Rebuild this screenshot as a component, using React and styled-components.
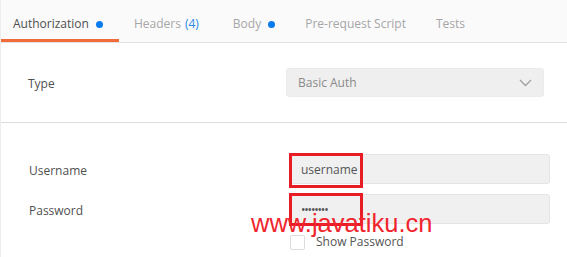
import React from "react";
import styled, { createGlobalStyle } from "styled-components";

const Global = createGlobalStyle`
  html, body { margin: 0; padding: 0; background: #ffffff; }
  body { font-family: "Open Sans", "Noto Sans", sans-serif; }
`;

const Page = styled.div`
  position: relative;
  width: 567px;
  height: 257px;
  overflow: hidden;
  background: #ffffff;
  border-left: 1px solid #eeeeee;
  box-sizing: border-box;
`;

const TabBar = styled.div`
  display: flex;
  height: 42px;
  background: #fafafa;
  border-bottom: 1px solid #e2e2e2;
  margin-left: -1px;
`;

const Tab = styled.div`
  display: flex;
  align-items: flex-start;
  box-sizing: border-box;
  height: 42px;
  padding: 16px ${(p) => p.$pr}px 0 ${(p) => p.$pl}px;
  border-bottom: 3px solid ${(p) => (p.$active ? "#f26b3a" : "transparent")};
  font-size: 12px;
  line-height: 16px;
  color: ${(p) => (p.$active ? "#505050" : "#a6a6a6")};
  white-space: nowrap;
`;

const Count = styled.span`
  color: #2a8ae8;
  margin-left: 4px;
`;

const Dot = styled.span`
  width: 7px;
  height: 7px;
  border-radius: 50%;
  background: #097bed;
  margin: 5px 0 0 7px;
`;

const TypeSection = styled.div`
  display: grid;
  grid-template-columns: 258px 258px;
  align-items: center;
  padding: 25px 0 25px 27px;
  border-bottom: 1px solid #dddddd;
`;

const Label = styled.div`
  font-size: 12px;
  line-height: 16px;
  padding-top: ${(p) => p.$offset || 0}px;
  color: #505050;
`;

const Select = styled.div`
  display: flex;
  align-items: center;
  justify-content: space-between;
  box-sizing: border-box;
  height: 29px;
  padding: 0 11px 0 11px;
  background: #efefef;
  border: 1px solid #ebebeb;
  border-radius: 3px;
  font-size: 12px;
  color: #8a8a8a;
`;

const FieldsSection = styled.div`
  display: grid;
  grid-template-columns: 261px 260px;
  row-gap: 10px;
  align-items: center;
  padding: 31px 0 0 28px;
`;

const FieldWrap = styled.div`
  position: relative;
`;

const Input = styled.input`
  display: block;
  box-sizing: border-box;
  width: 260px;
  height: 30px;
  margin: 0;
  padding: 0 10px;
  background: #f0f0f0;
  border: 1px solid #e4e4e4;
  border-radius: 3px;
  font-family: "Open Sans", sans-serif;
  font-size: 12px;
  color: #555555;
  outline: none;
  letter-spacing: ${(p) => (p.type === "password" ? "-1.2px" : "0")};
`;

const Highlight = styled.div`
  position: absolute;
  left: -1px;
  top: -1px;
  width: 74px;
  height: ${(p) => p.$h}px;
  box-sizing: border-box;
  border: 3px solid #e81c24;
  pointer-events: none;
`;

const CheckRow = styled.label`
  grid-column: 2;
  display: flex;
  align-items: center;
  gap: 11px;
  font-size: 12px;
  line-height: 16px;
  color: #555555;
`;

const Box = styled.span`
  width: 15px;
  height: 15px;
  box-sizing: border-box;
  border: 1px solid #dcdcdc;
  border-radius: 2px;
  background: #ffffff;
`;

const Watermark = styled.div`
  position: absolute;
  left: 250px;
  top: 211px;
  font-family: "Liberation Sans", Arial, sans-serif;
  font-size: 25.5px;
  line-height: 25px;
  color: #f0262e;
  pointer-events: none;
  white-space: nowrap;
`;

export default function App() {
  return (
    <>
      <Global />
      <Page>
        <TabBar>
          <Tab $active $pl={13} $pr={16}>
            Authorization<Dot />
          </Tab>
          <Tab $pl={15} $pr={17}>
            Headers<Count>(4)</Count>
          </Tab>
          <Tab $pl={17} $pr={15}>
            Body<Dot />
          </Tab>
          <Tab $pl={15} $pr={15}>
            Pre-request Script
          </Tab>
          <Tab $pl={15} $pr={15}>
            Tests
          </Tab>
        </TabBar>

        <TypeSection>
          <Label $offset={3}>Type</Label>
          <Select>
            <span>Basic Auth</span>
            <svg width="13" height="8" viewBox="0 0 13 8">
              <polyline
                points="1,1 6.5,6.5 12,1"
                fill="none"
                stroke="#a0a0a0"
                strokeWidth="1.3"
              />
            </svg>
          </Select>
        </TypeSection>

        <FieldsSection>
          <Label $offset={3}>Username</Label>
          <FieldWrap>
            <Input type="text" defaultValue="username" readOnly />
            <Highlight $h={35} />
          </FieldWrap>
          <Label $offset={3}>Password</Label>
          <FieldWrap>
            <Input type="password" defaultValue="password" readOnly />
            <Highlight $h={33} />
          </FieldWrap>
          <CheckRow>
            <Box />
            Show Password
          </CheckRow>
        </FieldsSection>

        <Watermark>www.javatiku.cn</Watermark>
      </Page>
    </>
  );
}
